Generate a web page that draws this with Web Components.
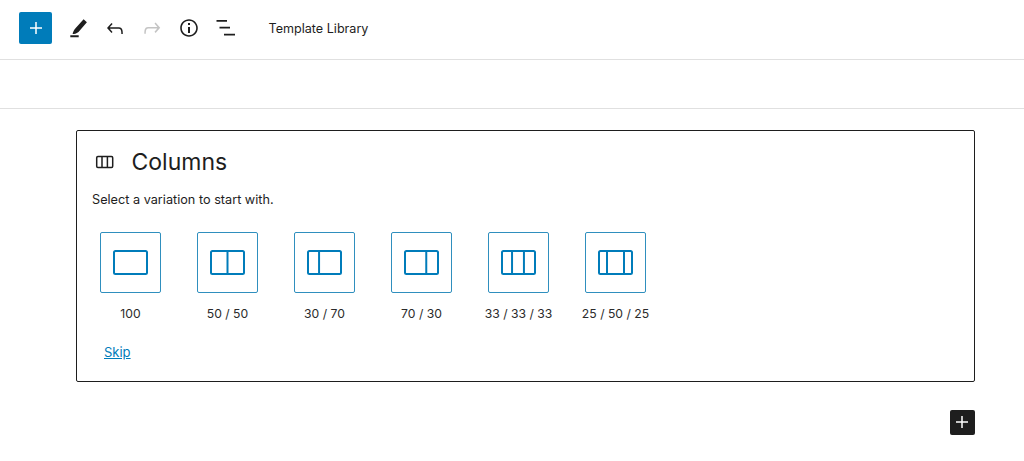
<!DOCTYPE html>
<html>
<head>
<meta charset="utf-8">
<title>Template Library</title>
<style>
  html, body { margin: 0; background: #fff; }
  body { font-family: Inter, "Liberation Sans", sans-serif; color: #1e1e1e; overflow: hidden; height: 461px; }
</style>
</head>
<body>
<editor-toolbar label="Template Library"></editor-toolbar>
<editor-subbar></editor-subbar>
<columns-placeholder>
  <column-variation label="100" parts="1"></column-variation>
  <column-variation label="50 / 50" parts="0.5"></column-variation>
  <column-variation label="30 / 70" parts="0.34"></column-variation>
  <column-variation label="70 / 30" parts="0.64"></column-variation>
  <column-variation label="33 / 33 / 33" parts="0.31,0.66"></column-variation>
  <column-variation label="25 / 50 / 25" parts="0.25,0.75"></column-variation>
</columns-placeholder>
<block-appender></block-appender>

<script>
class EditorToolbar extends HTMLElement {
  constructor() {
    super();
    this.attachShadow({ mode: 'open' });
  }

  connectedCallback() {
    this.shadowRoot.innerHTML = `
      <style>
        :host {
          display: flex;
          align-items: center;
          box-sizing: border-box;
          height: 60px;
          padding: 0 0 3px 19.3px;
          border-bottom: 1px solid #e0e0e0;
        }
        .add {
          display: flex;
          align-items: center;
          justify-content: center;
          width: 32.7px;
          height: 32.7px;
          border-radius: 2px;
          background: #007cba;
          margin-right: 13.5px;
        }
        .tool { display: flex; width: 24px; height: 24px; margin-right: 13px; }
        .tool:nth-of-type(1) { margin-right: 14px; }
        .tool:nth-of-type(5) { margin-right: 0; }
        svg { display: block; }
        .title { margin-left: 30px; font-size: 12.6px; color: #1e1e1e; white-space: nowrap; }
      </style>
      <div class="add">
        <svg width="24" height="24" viewBox="0 0 24 24"><path fill="#fff" d="M18 11.25h-5.25V6h-1.5v5.25H6v1.5h5.25V18h1.5v-5.25H18z"/></svg>
      </div>
      <span class="tool"><svg width="24" height="24" viewBox="0 0 24 24"><path fill="#1e1e1e" d="M18.6 3.300 21.900 6.300 13.500 15.900C11.300 17.400 9.300 18 7.600 18.100 8 16 9 13.800 10.500 12.200zM5.300 19.300h8.400v2H5.300z"/></svg></span>
      <span class="tool"><svg width="24" height="24" viewBox="0 0 24 24"><path fill="#1e1e1e" d="M18.300 11.700c-.6-.6-1.400-.9-2.300-.9H6.700l2.900-3.300-1.100-1-4.500 5L8.500 16.500l1-1-2.700-3.200H16c.5 0 .9.2 1.300.5 1 1 1 3.400 1 4.500v.3h1.500v-.2c0-1.500 0-4.300-1.500-5.700z" transform="translate(0 .4)"/></svg></span>
      <span class="tool"><svg width="24" height="24" viewBox="0 0 24 24"><path fill="#c4c4c4" d="M15.600 6.500l-1.100 1 2.900 3.300H8c-.9 0-1.700.3-2.300.9-1.400 1.500-1.400 4.200-1.400 5.800v.2h1.500v-.3c0-1.100 0-3.500 1-4.500.3-.3.7-.5 1.300-.5h9.200L14.500 15.700l1.100 1.100 4.600-5.200z" transform="translate(0 .1)"/></svg></span>
      <span class="tool"><svg width="24" height="24" viewBox="0 0 24 24"><path fill="#1e1e1e" d="M12 3.200c-4.800 0-8.800 3.900-8.800 8.800 0 4.800 3.900 8.800 8.800 8.800 4.800 0 8.800-3.900 8.800-8.800 0-4.800-4-8.800-8.800-8.800zm0 16c-4 0-7.200-3.300-7.200-7.200C4.800 8 8 4.800 12 4.800s7.200 3.300 7.200 7.200c0 4-3.200 7.200-7.200 7.200zM11 17h2v-6h-2v6zm0-8h2V7h-2v2z"/></svg></span>
      <span class="tool"><svg width="24" height="24" viewBox="0 0 24 24"><path fill="#1e1e1e" d="M2.500 4.500h10.500v1.700H2.500zM5.500 11.200h10.500v1.700H5.500zM10 18.200h11v1.700H10z" transform="translate(0 -.4)"/></svg></span>
      <span class="title">${this.getAttribute('label')}</span>
    `;
  }
}

class EditorSubbar extends HTMLElement {
  constructor() {
    super();
    this.attachShadow({ mode: 'open' });
    this.shadowRoot.innerHTML = `
      <style>
        :host { display: block; height: 48px; border-bottom: 1px solid #e0e0e0; }
      </style>
    `;
  }
}

class ColumnsPlaceholder extends HTMLElement {
  constructor() {
    super();
    this.attachShadow({ mode: 'open' });
    this.shadowRoot.innerHTML = `
      <style>
        :host {
          display: block;
          box-sizing: border-box;
          width: 898.5px;
          height: 252px;
          margin: 21px 0 0 76px;
          padding: 16px 15px 0;
          border: 1px solid #1e1e1e;
          border-radius: 2px;
          background: #fff;
        }
        header { display: flex; align-items: center; height: 30px; }
        svg { display: block; margin: 0 14.5px 0 1px; }
        h2 { margin: 0; font-size: 23px; font-weight: 400; line-height: 30px; }
        p { margin: 14px 0 0; font-size: 12.7px; line-height: 18px; }
        .list { display: flex; margin: 23px 0 0 -10px; }
        a {
          display: inline-block;
          margin: 20px 0 0 12px;
          font-size: 13px;
          line-height: 18px;
          color: #007cba;
          text-decoration: underline;
        }
      </style>
      <header>
        <svg width="24" height="24" viewBox="0 0 24 24"><g fill="none" stroke="#1e1e1e" stroke-width="1.5"><rect x="3.7" y="6.500" width="16" height="11" rx="1.2"/><path d="M9 6.500v11M14.400 6.500v11"/></g></svg>
        <h2>Columns</h2>
      </header>
      <p>Select a variation to start with.</p>
      <div class="list"><slot></slot></div>
      <a href="#">Skip</a>
    `;
  }
}

class ColumnVariation extends HTMLElement {
  constructor() {
    super();
    this.attachShadow({ mode: 'open' });
  }

  connectedCallback() {
    const dividers = this.getAttribute('parts').split(',').map(Number).filter(p => p < 1);
    const lines = dividers.map(p => {
      const x = 0.5 + p * 34;
      return `<line x1="${x}" y1="1" x2="${x}" y2="24" stroke="#007cba" stroke-width="2"/>`;
    }).join('');
    this.shadowRoot.innerHTML = `
      <style>
        :host {
          display: flex;
          flex-direction: column;
          align-items: center;
          width: 97px;
          flex: none;
        }
        .box {
          display: flex;
          align-items: center;
          justify-content: center;
          box-sizing: border-box;
          width: 61px;
          height: 61px;
          border: 1px solid #2f8fbe;
          border-radius: 2px;
        }
        span { margin-top: 12px; font-size: 12.2px; line-height: 18px; white-space: nowrap; color: #2b2b2b; }
      </style>
      <div class="box">
        <svg width="35" height="25" viewBox="0 0 35 25">
          <rect x="1" y="1" width="33" height="23" rx="1.5" fill="none" stroke="#007cba" stroke-width="2"/>
          ${lines}
        </svg>
      </div>
      <span>${this.getAttribute('label')}</span>
    `;
  }
}

class BlockAppender extends HTMLElement {
  constructor() {
    super();
    this.attachShadow({ mode: 'open' });
    this.shadowRoot.innerHTML = `
      <style>
        :host {
          display: flex;
          align-items: center;
          justify-content: center;
          width: 24.5px;
          height: 24.5px;
          margin: 28px 0 0 950px;
          border-radius: 2px;
          background: #1e1e1e;
        }
        svg { display: block; }
      </style>
      <svg width="24" height="24" viewBox="0 0 24 24"><path fill="#fff" d="M18 11.25h-5.25V6h-1.5v5.25H6v1.5h5.25V18h1.5v-5.25H18z"/></svg>
    `;
  }
}

customElements.define('editor-toolbar', EditorToolbar);
customElements.define('editor-subbar', EditorSubbar);
customElements.define('columns-placeholder', ColumnsPlaceholder);
customElements.define('column-variation', ColumnVariation);
customElements.define('block-appender', BlockAppender);
</script>
</body>
</html>
